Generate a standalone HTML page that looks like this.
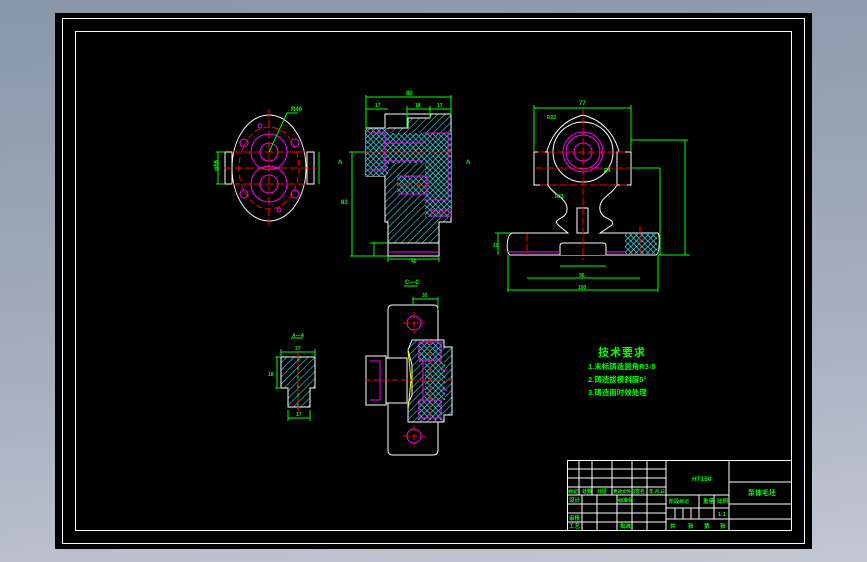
<!DOCTYPE html>
<html><head><meta charset="utf-8"><style>
html,body{margin:0;padding:0;width:867px;height:562px;overflow:hidden;background:linear-gradient(175deg,#8996aa 0%,#a6afbe 60%,#c2c8d2 100%);}
svg{position:absolute;left:0;top:0}
text{font-family:"Liberation Sans","Noto Sans CJK SC",sans-serif;fill:#00ff00;font-weight:bold}
</style></head><body>
<svg width="867" height="562" viewBox="0 0 867 562" xmlns="http://www.w3.org/2000/svg">
<defs>
<pattern id="h" width="5" height="5" patternUnits="userSpaceOnUse" patternTransform="rotate(45)">
<rect width="5" height="5" fill="#000"/><line x1="0" y1="0" x2="0" y2="5" stroke="#2ec8d8" stroke-width="1.3"/></pattern>
<pattern id="x" width="4" height="4" patternUnits="userSpaceOnUse" patternTransform="rotate(45)">
<rect width="4" height="4" fill="#000"/><line x1="0" y1="0" x2="0" y2="4" stroke="#3ad8e8" stroke-width="1.5"/><line x1="0" y1="0" x2="4" y2="0" stroke="#3ad8e8" stroke-width="1.5"/></pattern>
</defs>
<rect x="55" y="13" width="757" height="536" fill="#000"/>
<rect x="62.5" y="18.5" width="742" height="525" fill="none" stroke="#fff" stroke-width="1"/>
<rect x="75.5" y="31.5" width="716" height="499" fill="none" stroke="#fff" stroke-width="1"/>

<!-- View 1 -->
<g fill="none" stroke-width="1">
<ellipse cx="269" cy="168" rx="37" ry="53" stroke="#fff"/>
<rect x="225" y="152" width="7" height="32" stroke="#fff" fill="#000"/>
<rect x="307" y="152" width="7" height="32" stroke="#fff" fill="#000"/>
<circle cx="269" cy="152" r="18" stroke="#f0f"/><circle cx="269" cy="184" r="18" stroke="#f0f"/>
<circle cx="269" cy="152" r="9" stroke="#f0f"/><circle cx="269" cy="184" r="9" stroke="#f0f"/>
<ellipse cx="269" cy="168" rx="30" ry="41" stroke="#f00" stroke-dasharray="6,3"/>
<circle cx="244" cy="143" r="4" stroke="#f0f"/><circle cx="295" cy="143" r="4" stroke="#f0f"/>
<circle cx="244" cy="194" r="4" stroke="#f0f"/><circle cx="295" cy="194" r="4" stroke="#f0f"/>
<circle cx="260" cy="126" r="2" stroke="#f0f"/><circle cx="279" cy="210" r="2" stroke="#f0f"/>
<path d="M269 109V225M224 168H316M232 152H307M232 184H307" stroke="#f00" stroke-dasharray="8,3"/>
<path d="M269 152L287 113H298M218 152V184M216 152H225M216 184H225" stroke="#0f0"/>
<path d="M319 152V184" stroke="#0f0"/>
</g>
<text x="291" y="111" font-size="6">R40</text>
<text x="211" y="172" font-size="6" transform="rotate(-90 214 168)">φ66</text>

<!-- View 2 -->
<g stroke-width="1">
<path d="M366 128H385V114H451V222H439V243H388V222H385V176H366Z" fill="url(#h)" stroke="#fff"/>
<rect x="366" y="128" width="22" height="48" fill="url(#x)"/>
<rect x="385" y="133" width="47" height="30" fill="url(#x)"/>
<rect x="425" y="133" width="26" height="84" fill="url(#x)"/>
<rect x="397" y="176" width="30" height="18" fill="url(#x)"/>
<path d="M366 128H385V114H431L430 118H408V128H388" fill="#000" stroke="#fff"/>
<rect x="388" y="243" width="51" height="13" fill="#000" stroke="#fff"/>
<path d="M388 252H439M370 133H385V170H370M384 143H423M384 161H423M423 133H448V200H423M398 176H427V194H398M430 210H451M430 216H451" stroke="#f0f" fill="none"/>
<path d="M366 152H451M397 185H430M430 213H451" stroke="#f00" stroke-dasharray="6,3"/>
<path d="M366 97H451M366 109H388M407 109H430M430 109H451M366 95V130M451 95V115M407 106V128M430 106V118M349 152H366M352 152V256M350 256H388M388 259H439M388 256V262M439 256V262M374 243V256M370 243H388" stroke="#0f0" fill="none"/>
</g>
<text x="406" y="95" font-size="6">80</text><text x="375" y="107" font-size="5">17</text><text x="415" y="107" font-size="5">18</text><text x="437" y="107" font-size="5">17</text>
<text x="341" y="204" font-size="6">83</text><text x="411" y="263" font-size="5">40</text>
<text x="338" y="164" font-size="6">A</text><text x="466" y="164" font-size="6">A</text>
<text x="405" y="284" font-size="6">C—C</text>

<!-- View 3 -->
<g fill="none" stroke-width="1">
<path d="M548 185C540 170 544 125 583 115C622 125 626 170 617 185C612 195 598 198 600 210C602 220 615 218 612 225L600 233H658C660 235 660 253 656 255H510C506 253 506 235 512 233H568L558 225C552 218 566 220 567 210C568 198 553 195 548 185Z" stroke="#fff"/>
<circle cx="583" cy="152" r="30" stroke="#fff"/>
<circle cx="583" cy="152" r="20" stroke="#f0f"/><circle cx="583" cy="152" r="17" stroke="#f0f"/><circle cx="583" cy="152" r="9" stroke="#f0f"/>
<rect x="534" y="152" width="14" height="33" stroke="#fff" fill="#000"/>
<rect x="617" y="152" width="14" height="33" stroke="#fff" fill="#000"/>
<rect x="577" y="208" width="11" height="25" stroke="#fff" fill="#000"/>
<path d="M560 255V246Q560 243 563 243H603Q606 243 606 246V255" stroke="#fff" fill="#000"/>
<rect x="625" y="234" width="32" height="20" fill="url(#x)" stroke="none"/>
<path d="M509 252H560M606 252H625" stroke="#f0f"/>
<path d="M583 108V260M538 152H628M536 168H630M540 185H628M527 234V255M640 226V255" stroke="#f00" stroke-dasharray="7,3"/>
<path d="M534 108H631M534 105V152M631 105V152M508 290H658M508 255V292M658 255V292M527 278H640M560 266H606M495 233H510M498 233V255M631 140H688M631 168H660M685 140V255M660 168V255M658 255H690" stroke="#0f0"/>
</g>
<text x="579" y="105" font-size="6">77</text><text x="578" y="289" font-size="5">190</text><text x="579" y="277" font-size="5">96</text>
<text x="547" y="119" font-size="5">R22</text><text x="555" y="198" font-size="5">R11</text><text x="604" y="172" font-size="5">R4</text>
<text x="493" y="247" font-size="5">19</text>

<!-- View 4 -->
<g fill="none" stroke-width="1">
<path d="M392 305H434Q438 305 438 310V450Q438 455 433 455H392Q388 455 388 450V310Q388 305 392 305Z" stroke="#fff" fill="#000"/>
<rect x="366" y="356" width="20" height="49" stroke="#fff" fill="#000"/>
<rect x="386" y="358" width="21" height="45" stroke="#fff" fill="#000"/>
<path d="M370 361H380V400H370" stroke="#f0f"/>
<path d="M412 340H444V347H452V415H444V422H408V404L412 395V365L408 350Z" fill="url(#h)" stroke="#fff"/>
<rect x="418" y="342" width="24" height="20" fill="url(#x)"/><rect x="418" y="400" width="24" height="20" fill="url(#x)"/>
<rect x="425" y="362" width="20" height="38" fill="url(#x)"/>
<path d="M419 342H441V360H419ZM419 400H441V418H419ZM423 360V400M441 370H447M441 390H447" stroke="#f0f"/>
<path d="M408 350L411 380L408 410" stroke="#ff0"/>
<circle cx="414" cy="323" r="7" stroke="#f0f"/><circle cx="414" cy="436" r="7" stroke="#f0f"/>
<path d="M403 323H425M414 312V334M403 436H425M414 425V447M365 380H452M430 340V420" stroke="#f00" stroke-dasharray="6,3"/>
<path d="M413 299H438M413 297V305M438 297V310M404 286H418" stroke="#0f0"/>
</g>
<text x="422" y="297" font-size="5">30</text>

<!-- View A-A -->
<g fill="none" stroke-width="1">
<path d="M281 357H315V388H310V407H288V388H281Z" fill="url(#h)" stroke="#fff"/>
<path d="M298 352V412M281 352H315M281 349V357M315 349V357M275 357H281M275 388H281M277 357V388M288 410V421M310 410V421M288 418H310M291 338H303" stroke="#0f0"/>
<path d="M298 352V412" stroke="#f00" stroke-dasharray="6,3"/>
</g>
<text x="292" y="337" font-size="5">A—A</text><text x="295" y="350" font-size="5">37</text><text x="268" y="376" font-size="5">18</text><text x="296" y="416" font-size="5">17</text>

<!-- tech req -->
<text x="598" y="356" font-size="11" letter-spacing="1">技术要求</text>
<text x="588" y="369" font-size="7.5">1.未标铸造圆角R3-5</text>
<text x="588" y="382" font-size="7.5">2.铸造拔模斜度5°</text>
<text x="588" y="395" font-size="7.5">3.铸造面时效处理</text>

<!-- title block -->
<g stroke="#fff" stroke-width="1" fill="none">
<rect x="567.5" y="460.5" width="224" height="70" fill="#000"/>
<path d="M567 469H666M567 478H666M567 487H666M567 495H729M567 504H666M567 513H666M567 522H666M666 508H729M666 519H729M729 482H792M729 504H792M729 519H792"/>
<path d="M579 460V495M592 460V495M612 460V495M632 460V530M647 460V530M666 460V530M729 460V530M582 495V530M597 495V530M617 495V530M699 495V519M714 495V519M675 508V519M683 508V519M691 508V519"/>
</g>
<g font-size="5.5">
<text x="692" y="481" font-size="6.5">HT150</text>
<text x="748" y="495" font-size="7">泵体毛坯</text>
<text x="669" y="503" font-size="5">阶段标记</text><text x="703" y="503">重量</text><text x="717" y="503">比例</text>
<text x="718" y="516">1:1</text>
<text x="670" y="528">共</text><text x="688" y="528">张</text><text x="704" y="528">第</text><text x="720" y="528">张</text>
<text x="568" y="493" font-size="5">标记</text><text x="582" y="493" font-size="5">处数</text><text x="597" y="493" font-size="5">分区</text><text x="613" y="493" font-size="4.5">更改文件号</text><text x="635" y="493" font-size="5">签名</text><text x="649" y="493" font-size="4.5">年.月.日</text>
<text x="569" y="502">设计</text><text x="618" y="502" font-size="5">标准化</text>
<text x="569" y="520">审核</text><text x="569" y="528">工艺</text><text x="620" y="528">批准</text>
</g>
</svg>
</body></html>
